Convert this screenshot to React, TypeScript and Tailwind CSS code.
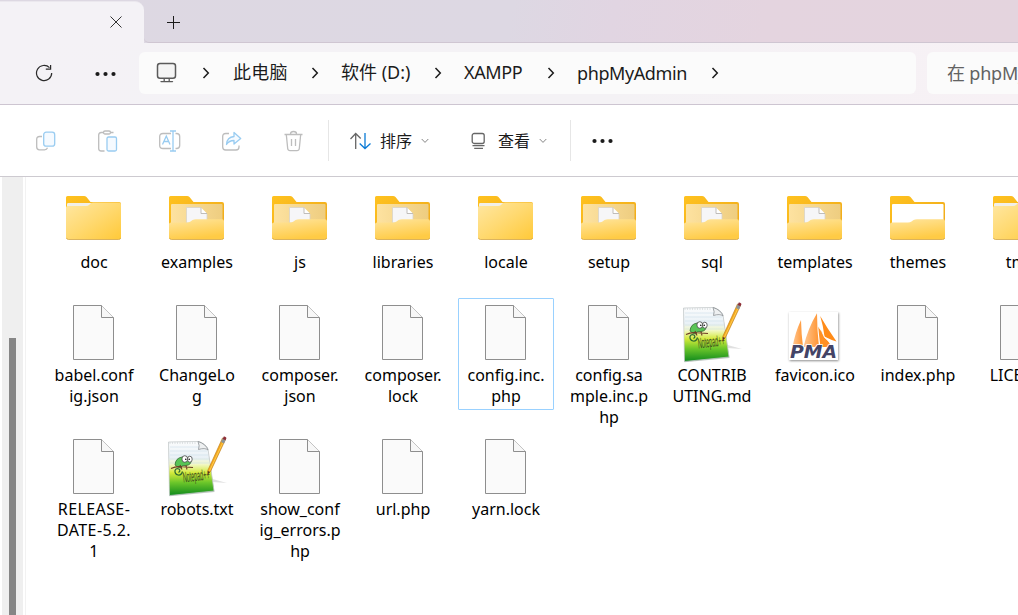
import type { ReactNode } from "react";

type Kind = "folder" | "folderDoc" | "folderOpen" | "file" | "notepad" | "pma";
type Entry = { kind: Kind; lines: string[]; selected?: boolean; wide?: boolean };

const rows: Entry[][] = [
  [
    { kind: "folder", lines: ["doc"] },
    { kind: "folderDoc", lines: ["examples"] },
    { kind: "folderDoc", lines: ["js"] },
    { kind: "folderDoc", lines: ["libraries"] },
    { kind: "folder", lines: ["locale"] },
    { kind: "folderDoc", lines: ["setup"] },
    { kind: "folderDoc", lines: ["sql"] },
    { kind: "folderDoc", lines: ["templates"] },
    { kind: "folderOpen", lines: ["themes"] },
    { kind: "folder", lines: ["tmp"] },
  ],
  [
    { kind: "file", lines: ["babel.conf", "ig.json"] },
    { kind: "file", lines: ["ChangeLo", "g"] },
    { kind: "file", lines: ["composer.", "json"] },
    { kind: "file", lines: ["composer.", "lock"] },
    { kind: "file", lines: ["config.inc.", "php"], selected: true },
    { kind: "file", lines: ["config.sa", "mple.inc.p", "hp"] },
    { kind: "notepad", lines: ["CONTRIB", "UTING.md"] },
    { kind: "pma", lines: ["favicon.ico"] },
    { kind: "file", lines: ["index.php"] },
    { kind: "file", lines: ["LICENSE"] },
  ],
  [
    { kind: "file", lines: ["RELEASE-", "DATE-5.2.", "1"], wide: true },
    { kind: "notepad", lines: ["robots.txt"] },
    { kind: "file", lines: ["show_conf", "ig_errors.p", "hp"] },
    { kind: "file", lines: ["url.php"] },
    { kind: "file", lines: ["yarn.lock"] },
  ],
];

function SharedDefs() {
  return (
    <svg className="absolute h-0 w-0" aria-hidden="true">
      <defs>
        <linearGradient id="front" x1="0" y1="0" x2="1" y2="1">
          <stop offset="0" stopColor="#ffe7a2" />
          <stop offset="0.5" stopColor="#ffd970" />
          <stop offset="1" stopColor="#ffc938" />
        </linearGradient>
        <linearGradient id="pocket" x1="0" y1="0" x2="0.35" y2="1">
          <stop offset="0" stopColor="#ffe59e" />
          <stop offset="1" stopColor="#ffcb45" />
        </linearGradient>
        <linearGradient id="back" x1="0" y1="0" x2="1" y2="1">
          <stop offset="0" stopColor="#ffc21f" />
          <stop offset="1" stopColor="#eca61a" />
        </linearGradient>
        <linearGradient id="inner" x1="0" y1="0" x2="1" y2="0">
          <stop offset="0" stopColor="#fde2a0" />
          <stop offset="1" stopColor="#eecd80" />
        </linearGradient>
        <linearGradient id="note" x1="0" y1="0" x2="0" y2="1">
          <stop offset="0" stopColor="#fbfcfd" />
          <stop offset="0.3" stopColor="#e9f1f6" />
          <stop offset="0.42" stopColor="#f3f8c8" />
          <stop offset="0.58" stopColor="#d3ea3a" />
          <stop offset="0.76" stopColor="#6cc62a" />
          <stop offset="1" stopColor="#0f8a1d" />
        </linearGradient>
        <linearGradient id="sail" x1="0" y1="0" x2="1" y2="0">
          <stop offset="0" stopColor="#ffc794" />
          <stop offset="1" stopColor="#ff9430" />
        </linearGradient>
        <filter id="soft" x="-20%" y="-20%" width="140%" height="150%">
          <feDropShadow dx="0.6" dy="1" stdDeviation="1" floodOpacity="0.45" />
        </filter>
      </defs>
    </svg>
  );
}

function Folder({ kind }: { kind: Kind }) {
  return (
    <>
      <path d="M4 51V10.500Q4 9 5.500 9H22Q23.500 9 24.500 10L28.500 15H57Q59 15 59 17V51Z" fill="url(#back)" />
      {kind === "folder" ? (
        <>
          <path d="M5 20V17Q5 16 6.500 16H57Q58.500 16 58.500 18V22H5Z" fill="#f1efe9" />
          <path d="M4 20.500Q4 19 5.500 19H24Q26 19 27 18L28.500 16.500Q29.500 15.500 31.500 15.500H57Q59 15.500 59 17.500V50.500Q59 52.500 57 52.500H6Q4 52.500 4 50.500Z" fill="url(#front)" />
        </>
      ) : (
        <>
          <path
            d="M6 18Q6 17 7 17H56.500Q57.500 17 57.500 18V36H6Z"
            fill={kind === "folderOpen" ? "#ffffff" : "url(#inner)"}
          />
          {kind === "folderDoc" && (
            <>
              <path d="M21.500 20.500H35.500L42 27V36H21.500Z" fill="#f6f6f8" stroke="#d8d3c8" strokeWidth="0.8" />
              <path d="M36 20.500V26.500H42" fill="#ffffff" stroke="#b9b6b2" strokeWidth="0.9" />
            </>
          )}
          <path d="M4 37Q4 35.500 6 35.500H22Q24 35.500 25.500 34.500L27.500 33Q29 32.300 31 32.300H57Q59 32.300 59 34.300V50.500Q59 52.500 57 52.500H6Q4 52.500 4 50.500Z" fill="url(#pocket)" />
        </>
      )}
      <path d="M4.500 51Q5 52.500 6.500 52.500H56.500Q58.300 52.500 58.700 51" fill="none" stroke="#d2a64b" strokeWidth="0.8" />
    </>
  );
}

function BlankFile() {
  return (
    <>
      <path d="M11.500 5.500H39.500L51.500 17.500V59.500H11.500Z" fill="#fafafa" stroke="#8e8e8e" />
      <path d="M39.500 5.500V17.500H51.500" fill="#f7f7f7" stroke="#8e8e8e" />
    </>
  );
}

function NotepadFile() {
  return (
    <>
      <path d="M44 44L62 49L47 48Z" fill="#000" opacity="0.12" />
      <path d="M3.500 8L35 7.500Q41 10 43 15L49.500 58L4.500 62.300Z" fill="#9aa39c" opacity="0.6" />
      <path d="M3.500 8L33 7.500Q41 10 43 15L49 57L4.500 61.500Z" fill="url(#note)" stroke="#c3c8ca" strokeWidth="0.7" />
      <path d="M4.500 9H32" stroke="#c0c5c8" strokeWidth="0.9" strokeDasharray="1 1.500" />
      <path d="M5 13H34M5 17H42M5 21H43M5 25H44M5 29H44" stroke="#c6d8e6" strokeWidth="0.5" />
      <path d="M33 7.500Q35 12 33.500 15.500Q40 13.500 43 16Q41 10 33 7.500Z" fill="#eef0f1" stroke="#8b9094" strokeWidth="0.8" />
      <path d="M10 31Q10.500 24 17 23Q24 22 26 27Q26 31 21 31.500Q16 31 16 34Q13 34 10 31Z" fill="#58c455" stroke="#285c2a" strokeWidth="0.7" />
      <path d="M17.500 37.500Q16.500 41.500 13 41Q9.500 40 10 36.500Q11 34 14 35Q16 37 13.500 38.500" fill="none" stroke="#2b6b30" strokeWidth="1.200" />
      <path d="M6 34.500Q11 32 17 32.800L28 33.500M15 31L17 35.500M21 31.500L22 35.500" fill="none" stroke="#6d3b23" strokeWidth="1.100" />
      <ellipse cx="19.800" cy="25" rx="2.900" ry="3.300" fill="#fff" stroke="#444" strokeWidth="0.8" />
      <ellipse cx="24.800" cy="25.200" rx="2.400" ry="3" fill="#fff" stroke="#444" strokeWidth="0.8" />
      <circle cx="20.800" cy="25.200" r="0.8" />
      <circle cx="24.200" cy="25.200" r="0.8" />
      <text
        x="0"
        y="0"
        transform="translate(18.500 48.500) rotate(-7) scale(0.36 1)"
        fontFamily="'Liberation Sans', sans-serif"
        fontSize="15"
        fill="#3a4a1c"
      >
        Notepad++
      </text>
      <path d="M57.500 4L60.500 5.500L45.500 37.500L42.800 40.500L42.900 36.200Z" fill="#f5a81c" stroke="#b87914" strokeWidth="0.6" />
      <path d="M59 6L44.500 37" stroke="#ffd35c" strokeWidth="0.8" />
      <path d="M42.900 37L42.800 40.500L45 38Z" fill="#4a3a28" />
      <path d="M56 8L58 3.500L61 5L59 9.500Z" fill="#8c9499" />
      <path d="M57.700 5L58.800 2.500Q60.500 2 61.500 4L60.500 6.200Z" fill="#8f2f38" />
    </>
  );
}

function PmaFile() {
  return (
    <>
      <rect x="6" y="12" width="49" height="48" fill="#fff" filter="url(#soft)" />
      <path d="M18 20Q12 33 9.500 47H20Q18.300 34 18 20Z" fill="url(#sail)" />
      <path d="M34 13.300Q25 28 20.500 47H36Q34 30 34 13.300Z" fill="url(#sail)" />
      <path d="M37.200 16Q44 28 53.500 41.500Q48 40 43.500 37.500L41.500 36.500Q40 25 37.200 16Z" fill="#ff8b18" />
      <path d="M35.200 26.500L38.800 31.500L41.500 37.500Q46 40.500 48 47H37.500Q36 36 35.200 26.500Z" fill="#ff9024" />
      <path d="M35.400 26.500L38.800 31.500L41.500 37.500L47.500 43" fill="none" stroke="#fff" strokeWidth="0.8" />
      <text
        x="7"
        y="57.500"
        textLength="47"
        lengthAdjust="spacingAndGlyphs"
        fontFamily="'DejaVu Sans', sans-serif"
        fontWeight="700"
        fontStyle="italic"
        fontSize="18"
        fill="#444466"
        stroke="#fff"
        strokeWidth="1.500"
        paintOrder="stroke"
      >
        PMA
      </text>
    </>
  );
}

function EntryIcon({ kind }: { kind: Kind }) {
  return (
    <svg width="64" height="64" viewBox="0 0 64 64" className="block shrink-0">
      {kind === "file" && <BlankFile />}
      {kind === "notepad" && <NotepadFile />}
      {kind === "pma" && <PmaFile />}
      {kind.startsWith("folder") && <Folder kind={kind} />}
    </svg>
  );
}

function Chevron({ className }: { className: string }) {
  return (
    <svg width="8" height="14" viewBox="0 0 8 14" className={"shrink-0 " + className}>
      <path d="M1.500 2L6.300 7L1.500 12" fill="none" stroke="#1c1c1c" strokeWidth="1.500" />
    </svg>
  );
}

function Crumb({ className, children }: { className: string; children: ReactNode }) {
  return <span className={"shrink-0 whitespace-nowrap text-[18px] leading-6 text-[#1b1b1b] " + className}>{children}</span>;
}

function Dots() {
  return (
    <svg width="22" height="6" viewBox="0 0 22 6" className="shrink-0" fill="#1b1b1b">
      <circle cx="2.500" cy="3" r="2.100" />
      <circle cx="10.500" cy="3" r="2.100" />
      <circle cx="18.500" cy="3" r="2.100" />
    </svg>
  );
}

function DownChevron() {
  return (
    <svg width="8" height="6" viewBox="0 0 8 6" className="shrink-0">
      <path d="M0.700 1L4 4.400L7.300 1" fill="none" stroke="#858585" strokeWidth="1" />
    </svg>
  );
}

function ToolIcon({ className, children }: { className: string; children: ReactNode }) {
  return (
    <svg width="24" height="24" viewBox="0 0 24 24" fill="none" strokeWidth="1.300" className={"shrink-0 " + className}>
      {children}
    </svg>
  );
}

export default function App() {
  return (
    <div className="flex h-[615px] w-[1018px] flex-col overflow-hidden bg-white font-['Noto_Sans','Noto_Sans_CJK_SC',sans-serif] text-black">
      <SharedDefs />

      <div className="flex h-[43px] shrink-0 bg-[linear-gradient(100deg,#ddd8e2_0%,#ddd8e3_50%,#e1d5e2_60%,#e4d4df_75%,#e4d4de_100%)]">
        <div className="flex w-[144px] shrink-0 flex-col bg-transparent">
          <div className="mt-px flex h-[42px] rounded-tr-[9px] border-t border-[#ebe8ee] bg-[#f4f2f6]">
            <svg width="12" height="12" viewBox="0 0 12 12" className="ml-[110px] mt-[14px]">
              <path d="M0.500 0.500L11.500 11.500M11.500 0.500L0.500 11.500" stroke="#333" strokeWidth="1" />
            </svg>
          </div>
        </div>
        <div className="flex grow rounded-bl-[5px] border-b border-[#cfc6d2]">
          <svg width="13" height="13" viewBox="0 0 13 13" className="ml-[23px] mt-[16px]">
            <path d="M0 6.500H13M6.500 0V13" stroke="#1b1b1b" strokeWidth="1" />
          </svg>
        </div>
      </div>

      <div className="flex h-[62px] shrink-0 border-b border-[#cdc5d1] bg-[linear-gradient(90deg,#f4f2f6_0%,#f4f2f5_60%,#f7f1f5_100%)] pt-[9px]">
        <svg width="20" height="20" viewBox="0 0 20 20" className="ml-[35px] mt-[11px] shrink-0" fill="none" stroke="#2b2b2b" strokeWidth="1.200">
          <path d="M14.500 4.700A7.600 7.600 0 1 0 16.700 10" />
          <path d="M15.600 2V6.200H10.800" />
        </svg>
        <div className="ml-[40px] mt-[19px] w-[44px] shrink-0">
          <Dots />
        </div>
        <div className="flex h-[42px] w-[777px] shrink-0 items-center rounded-[6px] bg-[#fbfbfb]">
          <svg width="22" height="22" viewBox="0 0 22 22" className="ml-[17px] shrink-0" fill="none" stroke="#5a5a5a">
            <rect x="1.500" y="1.600" width="18" height="14.600" rx="2.500" fill="#f4f4f4" strokeWidth="1.500" />
            <path d="M8.200 16.500V19M13.200 16.500V19" strokeWidth="1.300" />
            <path d="M5 19.600H16.500" strokeWidth="1.400" strokeLinecap="round" />
          </svg>
          <Chevron className="ml-[24px]" />
          <Crumb className="ml-[23px] w-[55px] pb-[2px] tracking-[0.3px]">此电脑</Crumb>
          <Chevron className="ml-[23px]" />
          <Crumb className="ml-[22px] w-[70px] pb-[2px]">软件 (D:)</Crumb>
          <Chevron className="ml-[23px]" />
          <Crumb className="ml-[22px] w-[59px] pb-[2px] tracking-[-0.35px]">XAMPP</Crumb>
          <Chevron className="ml-[24px]" />
          <Crumb className="ml-[22px] w-[110px] tracking-[-0.4px]">phpMyAdmin</Crumb>
          <Chevron className="ml-[24px]" />
        </div>
        <div className="ml-[11px] flex h-[42px] w-[140px] shrink-0 items-center rounded-[6px] bg-[#fbfbfb] pl-[20px]">
          <span className="whitespace-nowrap text-[18px] tracking-[-0.2px] text-[#626262]">在 phpMyAdmin</span>
        </div>
      </div>

      <div className="flex h-[72px] shrink-0 items-center border-b border-[#cdcad0] bg-white">
        <ToolIcon className="ml-[34px]">
          <path d="M8 7.500H5.500Q2.700 7.500 2.700 10.300V18Q2.700 20.800 5.500 20.800H10.500Q12.800 20.800 13.500 18.800" stroke="#bdbdbd" />
          <rect x="9.700" y="3.200" width="11" height="14" rx="2.500" stroke="#99ccf1" fill="#f5faff" />
        </ToolIcon>
        <ToolIcon className="ml-[38px]">
          <path d="M8 3.500H5.200Q2.700 3.500 2.700 6V19.500Q2.700 22 5.200 22H8.500M14 3.500H17.500" stroke="#bdbdbd" />
          <rect x="7.500" y="2" width="7" height="3" rx="1.500" stroke="#bdbdbd" />
          <rect x="11" y="8" width="9.500" height="14" rx="1.500" stroke="#99ccf1" fill="#f5faff" />
        </ToolIcon>
        <ToolIcon className="ml-[38px]">
          <path d="M13 4.500H5Q1.700 4.500 1.700 7.500V16.500Q1.700 19.500 5 19.500H13M17.500 4.500H18.500Q21.700 4.500 21.700 7.500V16.500Q21.700 19.500 18.500 19.500H17.500" stroke="#bdbdbd" />
          <path d="M4.500 15.500L8.300 7L12 15.500M6 12.500H10.700M15 2V22M12 2H18M12 22H18" stroke="#99ccf1" />
        </ToolIcon>
        <ToolIcon className="ml-[38px]">
          <path d="M9 4.500H5.700Q2.700 4.500 2.700 7.500V18Q2.700 21 5.700 21H16Q19 21 19 18V16.500" stroke="#bdbdbd" />
          <path d="M14 3.500L20.700 9.500L14 15V11.500Q9 11.500 6.500 15.500Q7 8 14 7.500Z" stroke="#99ccf1" fill="#f5faff" strokeLinejoin="round" />
        </ToolIcon>
        <ToolIcon className="ml-[38px]">
          <path d="M2.500 5.500H20.500M8.500 5.500V4.700Q8.500 2.500 11.500 2.500Q14.500 2.500 14.500 4.700V5.500M4.300 5.500L5.700 19.500Q6 21.700 8 21.700H15Q17 21.700 17.300 19.500L18.700 5.500M9.500 10V17M13.500 10V17" stroke="#bdbdbd" />
        </ToolIcon>
        <div className="ml-[22px] h-[41px] w-px bg-[#e6e6e6]" />
        <svg width="22" height="18" viewBox="0 0 22 18" fill="none" className="ml-[21px] shrink-0" strokeWidth="1.300">
          <path d="M5.700 17V1.500M0.500 7L5.700 1.500L10.700 6.500" stroke="#666" />
          <path d="M15 1V16.500M9.700 11.500L15 16.500L20.500 11.500" stroke="#0a7bd6" />
        </svg>
        <span className="ml-[8px] w-[33px] shrink-0 whitespace-nowrap text-[16px] text-[#1b1b1b]">排序</span>
        <div className="ml-[8px] flex">
          <DownChevron />
        </div>
        <svg width="16" height="18" viewBox="0 0 16 18" fill="none" className="ml-[41px] shrink-0" stroke="#666">
          <rect x="2.200" y="1.500" width="12" height="10" rx="2" strokeWidth="1.300" />
          <path d="M2.500 13.700H14.500M4.200 16.300H13" strokeWidth="1.200" />
        </svg>
        <span className="ml-[12px] w-[33px] shrink-0 whitespace-nowrap text-[16px] text-[#1b1b1b]">查看</span>
        <div className="ml-[8px] flex">
          <DownChevron />
        </div>
        <div className="ml-[23px] h-[41px] w-px bg-[#e6e6e6]" />
        <div className="ml-[21px]">
          <Dots />
        </div>
      </div>

      <div className="flex min-h-0 grow">
        <div className="ml-[2px] w-[21px] shrink-0 bg-[#efefef] pl-[7px] pt-[161px]">
          <div className="h-full w-[7px] bg-[#868686]" />
        </div>
        <div className="ml-[2px] w-px shrink-0 bg-[#f2f2f2]" />
        <div className="flex min-w-0 grow flex-col overflow-hidden pl-[20px] pt-[8px]">
          {rows.map((row, r) => (
            <div key={r} className={r === 0 ? "flex h-[113px] shrink-0 gap-[7px]" : "flex h-[134px] shrink-0 gap-[7px]"}>
              {row.map((entry) => (
                <div
                  key={entry.lines.join("")}
                  className={
                    "flex w-[96px] shrink-0 flex-col items-center self-start rounded-[1px] border pb-[2px] pt-px " +
                    (entry.selected ? "border-[#99d1ff]" : "border-transparent")
                  }
                >
                  <EntryIcon kind={entry.kind} />
                  <div
                    className={
                      "mt-px flex flex-col items-center text-[16px] leading-[21px] " +
                      (entry.wide ? "tracking-[0.4px]" : "")
                    }
                  >
                    {entry.lines.map((line) => (
                      <span key={line} className="whitespace-nowrap">
                        {line}
                      </span>
                    ))}
                  </div>
                </div>
              ))}
            </div>
          ))}
        </div>
      </div>
    </div>
  );
}
